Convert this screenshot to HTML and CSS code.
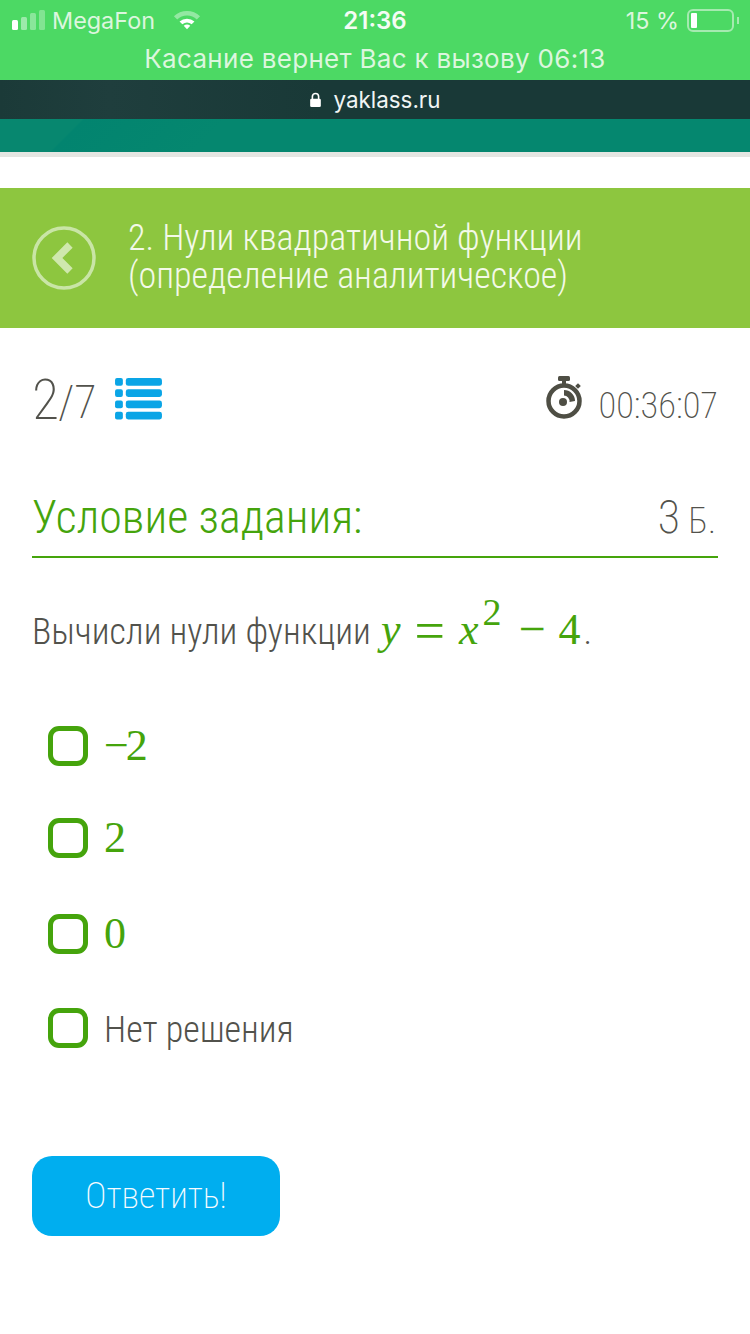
FILE: index.html
```html
<!DOCTYPE html>
<html lang="ru">
<head>
<meta charset="utf-8">
<title>ЯКласс</title>
<link rel="stylesheet" href="styles.css">
</head>
<body>
<div class="call-bar">
  <div class="status">
    <div class="status-left">
      <svg class="signal" width="36" height="22" viewBox="0 0 36 22"><rect x="0" y="11" width="6" height="10" rx="1.5" fill="#fff"/><rect x="9" y="8" width="6" height="13" rx="1.5" fill="#fff" opacity=".45"/><rect x="18" y="4" width="6" height="17" rx="1.5" fill="#fff" opacity=".35"/><rect x="27" y="1" width="6" height="20" rx="1.5" fill="#fff" opacity=".3"/></svg>
      <span>MegaFon</span>
      <svg class="wifi" width="28" height="22" viewBox="0 0 30 22"><path d="M1 7 A20 20 0 0 1 29 7 L25.5 10.5 A15 15 0 0 0 4.5 10.5Z" fill="#fff" opacity=".4"/><path d="M7 12.6 A12 12 0 0 1 23 12.6 L20 15.6 A8 8 0 0 0 10 15.6Z" fill="#fff"/><path d="M11.5 17.2 A5.5 5.5 0 0 1 18.5 17.2 L15 21Z" fill="#fff"/></svg>
    </div>
    <div class="status-time">21:36</div>
    <div class="status-right">
      <span>15 %</span>
      <div class="battery"><div class="battery-level"></div></div>
      <div class="battery-tip"></div>
    </div>
  </div>
  <div class="call-text">Касание вернет Вас к вызову 06:13</div>
</div>
<div class="url-bar">
  <svg width="13" height="16" viewBox="0 0 14 18"><path d="M3.5 8V5.2a3.5 3.5 0 0 1 7 0V8" fill="none" stroke="#fff" stroke-width="1.8"/><rect x="1" y="7.5" width="12" height="9.5" rx="1.5" fill="#fff"/></svg>
  <span>yaklass.ru</span>
</div>
<div class="teal-band"></div>
<div class="grey-line"></div>

<header class="topic">
  <svg class="back" width="64" height="64" viewBox="0 0 64 64"><circle cx="32" cy="32" r="30" fill="none" stroke="#c9e5a6" stroke-width="3.500"/><path d="M38 19 L25 32 L38 45" fill="none" stroke="#cfe8ad" stroke-width="7.500"/></svg>
  <h1 class="topic-title">2. Нули квадратичной функции<br>(определение аналитическое)</h1>
</header>

<main class="content">
  <div class="meta">
    <div class="progress">
      <span class="progress-now">2</span><span class="progress-total">/7</span>
      <svg class="list-icon" width="47" height="43" viewBox="0 0 48 44"><g fill="#0aa5e6"><rect x="0" y="0" width="8" height="8" rx="2"/><rect x="11" y="0" width="37" height="8" rx="2.500"/><rect x="0" y="11.500" width="8" height="8" rx="2"/><rect x="11" y="11.500" width="37" height="8" rx="2.500"/><rect x="0" y="23" width="8" height="8" rx="2"/><rect x="11" y="23" width="37" height="8" rx="2.500"/><rect x="0" y="34.500" width="8" height="8" rx="2"/><rect x="11" y="34.500" width="37" height="8" rx="2.500"/></g></svg>
    </div>
    <div class="timer">
      <svg class="timer-icon" width="38" height="44" viewBox="0 0 38 44"><g fill="#4e4e44"><rect x="13" y="0" width="12" height="5" rx="1.500"/><rect x="17" y="4" width="4" height="5"/><rect x="31" y="8" width="4" height="4" transform="rotate(45 33 10)"/></g><circle cx="19" cy="25" r="15.500" fill="none" stroke="#4e4e44" stroke-width="4.500"/><circle cx="18" cy="26" r="4" fill="#4e4e44"/><path d="M19 14 A11 11 0 0 1 30 25 L24.500 26 A6 6 0 0 0 19 19.500Z" fill="#4e4e44"/></svg>
      <span class="timer-text">00:36:07</span>
    </div>
  </div>

  <div class="section-head">
    <h2 class="section-title">Условие задания:</h2>
    <div class="score"><span class="score-num">3</span> Б.</div>
  </div>

  <p class="question">Вычисли нули функции <span class="formula"><i class="var-y">y</i><span class="eq">=</span><i>x</i><sup>2</sup><span class="minus">−</span>4</span><span class="dot">.</span></p>

  <ul class="options">
    <li class="option"><span class="box"></span><span class="math math-neg">−2</span></li>
    <li class="option option-b"><span class="box"></span><span class="math">2</span></li>
    <li class="option option-c"><span class="box"></span><span class="math">0</span></li>
    <li class="option option-d"><span class="box"></span><span class="opt-text">Нет решения</span></li>
  </ul>

  <button class="answer">Ответить!</button>
</main>
</body>
</html>
```
FILE: styles.css
```css
* { box-sizing: border-box; }
html, body { margin: 0; padding: 0; }
body {
  width: 750px;
  height: 1334px;
  overflow: hidden;
  background: #fff;
  font-family: "Roboto", "Liberation Sans", sans-serif;
  color: #52524c;
}
.call-bar {
  height: 80px;
  background: #4cd964;
  color: #dcf6de;
  font-family: "Inter", "Liberation Sans", sans-serif;
}
.status {
  height: 38px;
  padding: 2px 12px 0 12px;
  display: grid;
  grid-template-columns: 1fr auto 1fr;
  align-items: center;
  font-size: 23.400px;
}
.status-left { display: flex; align-items: center; gap: 4px; }
.wifi { margin-left: 14px; }
.status-time { font-weight: 600; font-size: 24px; color: #f4fcf4; }
.status-right { display: flex; align-items: center; justify-content: flex-end; gap: 8px; }
.battery { width: 47px; height: 23px; border: 2px solid #a5eab0; border-radius: 6px; padding: 2px; }
.battery-level { width: 6px; height: 100%; background: #fff; border-radius: 1px; }
.battery-tip { width: 2px; height: 7px; background: #a5eab0; margin-left: -5px; margin-right: -1px; }
.call-text { height: 42px; display: flex; align-items: center; justify-content: center; font-size: 26px; letter-spacing: .3px; padding-bottom: 2px; }
.url-bar {
  height: 39px;
  background: linear-gradient(90deg, #1b3a38, #1f3e3d 110px, #193937 320px);
  color: #f0f5f4;
  display: flex;
  align-items: center;
  justify-content: center;
  gap: 11px;
  font-size: 22.400px;
  font-family: "Inter", "Liberation Sans", sans-serif;
}
.teal-band { height: 33px; background: linear-gradient(135deg, #07876f 58px, #02846f 60px, #05876f 160px); }
.grey-line { height: 5px; background: #e4e6e2; }
.topic {
  margin-top: 31px;
  height: 140px;
  background: #8dc63f;
  display: flex;
  align-items: center;
  padding-left: 32px;
  gap: 32px;
}
.topic-title {
  margin: 0 0 2px;
  font-size: 36px;
  line-height: 38px;
  font-weight: 300;
  color: #f3f9e8;
  font-stretch: 75%;
}
.content { padding: 0 32px; }
.meta { display: flex; justify-content: space-between; align-items: flex-start; height: 140px; padding-top: 48px; }
.progress { display: flex; align-items: flex-start; font-weight: 200; font-stretch: 75%; }
.progress-now { font-size: 56px; line-height: 48px; }
.progress-total { font-size: 46px; line-height: 52px; margin-left: -1px; }
.list-icon { margin-left: 19px; margin-top: 2px; }
.timer { display: flex; align-items: flex-start; gap: 15px; font-weight: 200; font-stretch: 75%; }
.timer-text { font-size: 36.500px; line-height: 42px; margin-top: 9px; }
.section-head {
  display: flex;
  justify-content: space-between;
  align-items: baseline;
  border-bottom: 2px solid #45a40c;
  height: 90px;
  padding-top: 22px;
}
.section-title { margin: 0; font-size: 46px; font-weight: 300; color: #45a40c; font-stretch: 75%; }
.score { font-size: 36px; font-weight: 200; font-stretch: 75%; padding-right: 2px; }
.score-num { font-size: 46px; }
.question { margin: 34px 0 0; height: 76px; font-size: 36px; line-height: 76px; font-weight: 300; font-stretch: 75%; white-space: nowrap; }
.formula { font-family: "Liberation Serif", serif; font-weight: 400; color: #45a40c; font-size: 44px; }
.var-y { margin-left: 2px; }
.formula .eq { font-size: 54px; line-height: 0; margin: 0 14px 0 14px; vertical-align: -5px; }
.formula sup { font-size: 38px; line-height: 0; vertical-align: 19px; margin-left: 4px; }
.formula .minus { font-size: 48px; line-height: 0; margin: 0 13px 0 17px; vertical-align: -1px; }
.dot { margin-left: 3px; }
.options { list-style: none; margin: 58px 0 0; padding: 0 0 0 16px; }
.option { display: flex; align-items: center; gap: 16px; height: 40px; }
.option-b { margin-top: 52px; }
.option-c { margin-top: 56px; }
.option-d { margin-top: 54px; }
.box { width: 40px; height: 40px; border: 5px solid #45a40c; border-radius: 11px; flex: none; }
.math { font-family: "Liberation Serif", serif; font-size: 44px; line-height: 40px; color: #45a40c; }
.math-neg { letter-spacing: -3px; }
.opt-text { font-size: 36px; font-weight: 300; font-stretch: 75%; margin-top: 4px; }
.answer {
  display: block;
  margin-top: 108px;
  width: 248px;
  height: 80px;
  border: 0;
  border-radius: 20px;
  background: #00aeef;
  color: #f5fbff;
  font: inherit;
  font-size: 36px;
  font-weight: 200;
  font-stretch: 75%;
}
```
